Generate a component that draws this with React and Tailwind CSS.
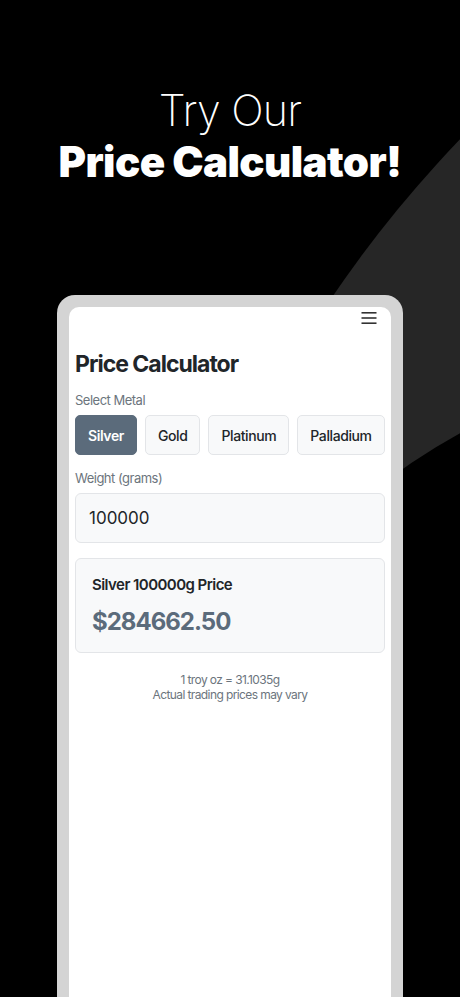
import React, { useState } from 'react';

const metals = [
  { name: 'Silver', pricePerGram: 2.846625 },
  { name: 'Gold', pricePerGram: 0 },
  { name: 'Platinum', pricePerGram: 0 },
  { name: 'Palladium', pricePerGram: 0 },
];

const PriceCalculator = () => {
  const [metal, setMetal] = useState('Silver');
  const [weight, setWeight] = useState('100000');

  return (
    <div className="px-[6px] pt-[4px]" style={{ fontFamily: 'Inter, "Noto Sans", sans-serif' }}>
      <div className="flex justify-end pr-[8px]">
        <svg width="16" height="14" viewBox="0 0 16 14" className="text-[#333]">
          <rect x="0.5" y="1" width="15" height="1.6" fill="currentColor" />
          <rect x="0.5" y="6.2" width="15" height="1.6" fill="currentColor" />
          <rect x="0.5" y="11.4" width="15" height="1.6" fill="currentColor" />
        </svg>
      </div>
      <h1 className="mt-[24px] text-[23px] leading-[30px] font-bold tracking-[-1px] text-[#212529]">Price Calculator</h1>

      <div className="mt-[12px] text-[13px] leading-[18px] tracking-[-0.5px] text-[#6c757d]">Select Metal</div>
      <div className="mt-[6px] flex gap-2">
        {metals.map((m) => (
          <button
            key={m.name}
            onClick={() => setMetal(m.name)}
            className={`h-[40px] px-3 rounded-[5px] border text-[14px] tracking-[-0.4px] ${
              m.name === metal
                ? 'bg-[#5b6b7b] border-[#5b6b7b] text-white font-semibold'
                : 'bg-[#f8f9fa] border-[#e3e5e8] text-[#212529] font-medium'
            }`}
          >
            {m.name}
          </button>
        ))}
      </div>

      <div className="mt-[14px] text-[13px] leading-[18px] tracking-[-0.5px] text-[#6c757d]">Weight (grams)</div>
      <input
        value={weight}
        onChange={(e) => setWeight(e.target.value)}
        className="mt-[6px] w-full h-[50px] px-[13px] rounded-[6px] border border-[#e3e5e8] bg-[#f8f9fa] text-[17px] text-[#212529] outline-none"
      />

      <div className="mt-[15px] h-[95px] rounded-[6px] border border-[#e3e5e8] bg-[#f8f9fa] px-[16px] pt-[16px]">
        <div className="text-[15px] leading-[20px] font-semibold tracking-[-0.55px] text-[#212529]">{metal} {weight}g Price</div>
        <div className="mt-[12px] text-[24px] leading-[30px] font-bold tracking-[-1px] text-[#5b6b7b]">$284662.50</div>
      </div>

      <div className="mt-[19px] text-center text-[12px] leading-[15px] tracking-[-0.6px] text-[#6c757d]">
        <div>1 troy oz = 31.1035g</div>
        <div>Actual trading prices may vary</div>
      </div>
    </div>
  );
};

export default function App() {
  return (
    <div className="relative w-[460px] h-[997px] overflow-hidden bg-black flex flex-col items-center">
      {/* background swoosh */}
      <div className="absolute left-[125px] top-[-229px] w-[2400px] h-[2400px] rounded-full bg-[#262626]" />
      <div className="absolute left-[117px] top-[351px] w-[1326px] h-[1326px] rounded-full bg-black" />

      <div className="relative mt-[84px] text-center text-white" style={{ fontFamily: 'Inter, "Noto Sans", sans-serif' }}>
        <div className="text-[43px] leading-[52px] font-extralight tracking-[-0.8px]">Try Our</div>
        <div className="text-[42px] leading-[52px] font-black tracking-[-0.6px]">Price Calculator!</div>
      </div>

      <div className="relative mt-[107px] w-[346px] flex-1 rounded-t-[18px] bg-[#d4d4d4] px-[12px] pt-[12px]">
        <div className="h-full rounded-t-[10px] bg-white">
          <PriceCalculator />
        </div>
      </div>
    </div>
  );
}
